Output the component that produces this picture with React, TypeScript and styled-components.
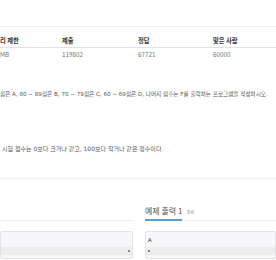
import React from 'react'
import styled, { createGlobalStyle } from 'styled-components'

const GlobalStyle = createGlobalStyle`
html, body {
    margin: 0;
    padding: 0;
    background: #fff;
}
body {
    font-family: "Noto Sans CJK KR", "Noto Sans", sans-serif;
    color: #333;
}
`

type Col = { head: string; value: string }

const stats: Col[] = [
    { head: '리 제한', value: 'MB' },
    { head: '제출', value: '119802' },
    { head: '정답', value: '67721' },
    { head: '맞은 사람', value: '60000' },
]

const App: React.FC = () => {
    return (
        <StyledPage>
            <GlobalStyle />
            <StatsTable>
                <StatsRow $head>
                    {stats.map((c) => <StatsCell key={c.head} $head>{c.head}</StatsCell>)}
                </StatsRow>
                <StatsRow>
                    {stats.map((c) => <StatsCell key={c.head}>{c.value}</StatsCell>)}
                </StatsRow>
            </StatsTable>

            <Paragraph $top={28} $size={5.6}>
                점은 A, 80 ~ 89점은 B, 70 ~ 79점은 C, 60 ~ 69점은 D, 나머지 점수는 F를 출력하는 프로그램을 작성하시오.
            </Paragraph>
            <Paragraph $top={45} $indent={2}>
                시험 점수는 0보다 크거나 같고, 100보다 작거나 같은 정수이다.
            </Paragraph>

            <Divider />

            <SampleRow>
                <SampleCol>
                    <Headline />
                    <SampleBox>
                        <SampleText> </SampleText>
                        <ScrollBar $right />
                    </SampleBox>
                </SampleCol>
                <SampleCol>
                    <Headline>
                        <HeadlineTitle>예제 출력 1</HeadlineTitle>
                        <CopyLink>복사</CopyLink>
                    </Headline>
                    <SampleBox>
                        <SampleText>A</SampleText>
                        <ScrollBar />
                    </SampleBox>
                </SampleCol>
            </SampleRow>
        </StyledPage>
    )
}

export default App

const StyledPage = styled.div`
width: 276px;
height: 260px;
overflow: hidden;
`

const StatsTable = styled.div`
margin-top: 26px;
border-top: 1px solid #ececec;
`

const StatsRow = styled.div<{ $head?: boolean }>`
display: grid;
grid-template-columns: 62px 76px 75px 1fr;
height: ${(p) => (p.$head ? '20px' : '14px')};
align-items: ${(p) => (p.$head ? 'end' : 'center')};
border-bottom: ${(p) => (p.$head ? '1px solid #e2e2e2' : 'none')};
`

const StatsCell = styled.div<{ $head?: boolean }>`
font-size: 6.3px;
line-height: 8px;
font-weight: ${(p) => (p.$head ? 700 : 400)};
color: ${(p) => (p.$head ? '#333' : '#777')};
padding-bottom: ${(p) => (p.$head ? '2px' : '0')};
white-space: nowrap;
`

const Paragraph = styled.p<{ $top: number; $indent?: number; $size?: number }>`
margin: ${(p) => p.$top}px 0 0 ${(p) => p.$indent || 0}px;
font-family: "DejaVu Sans", "Noto Sans CJK KR", sans-serif;
font-size: ${(p) => p.$size || 6}px;
line-height: 9px;
color: #555;
white-space: nowrap;
`

const Divider = styled.div`
margin-top: 25px;
border-top: 1px solid #f0f0f0;
`

const SampleRow = styled.div`
display: grid;
grid-template-columns: 133px 1fr;
column-gap: 12px;
margin-top: 25px;
`

const SampleCol = styled.div`
display: flex;
flex-direction: column;
`

const Headline = styled.div`
display: flex;
align-items: baseline;
height: 16px;
border-bottom: 1px solid #eee;
`

const HeadlineTitle = styled.div`
font-size: 8px;
line-height: 14px;
color: #555;
padding-bottom: 1px;
border-bottom: 2px solid #5aa0c8;
margin-bottom: -1px;
`

const CopyLink = styled.span`
font-size: 4px;
color: #3a7bbf;
margin-left: 4px;
`

const SampleBox = styled.div`
margin-top: 10px;
height: 26px;
background: #f7f7f9;
border: 1px solid #e4e4e8;
border-radius: 2px;
display: flex;
flex-direction: column;
`

const SampleText = styled.div`
font-family: "Liberation Mono", monospace;
font-size: 6px;
line-height: 8px;
color: #333;
padding: 5px 2px 0;
height: 8px;
`

const ScrollBar = styled.div<{ $right?: boolean }>`
margin-top: auto;
margin-bottom: 3px;
height: 8px;
background: #ededed;
position: relative;
&::after {
    content: '';
    position: absolute;
    top: 3px;
    ${(p) => (p.$right ? 'right: 2px;' : 'left: 2px;')}
    width: 2px;
    height: 2px;
    background: #888;
}
`
